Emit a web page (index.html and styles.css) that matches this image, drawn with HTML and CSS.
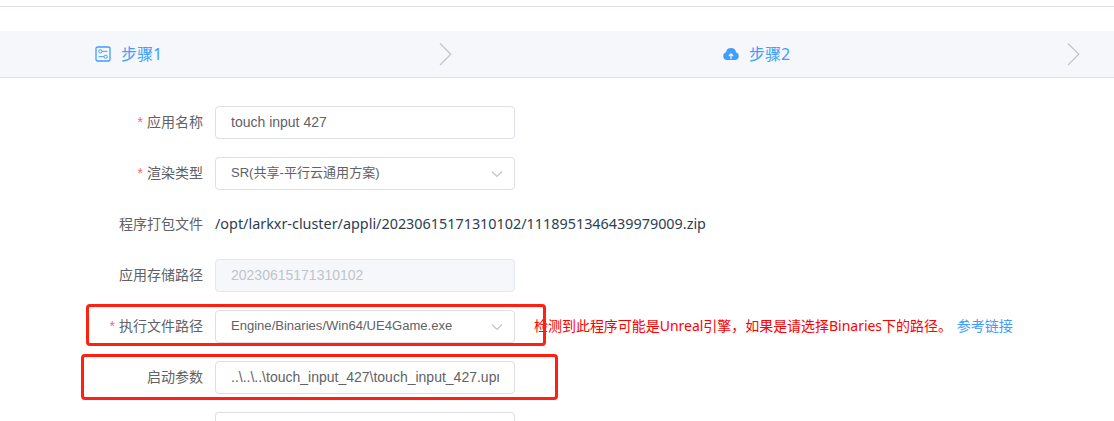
FILE: index.html
```html
<!DOCTYPE html>
<html lang="zh-CN">
<head>
<meta charset="utf-8">
<title>应用编辑</title>
<link rel="stylesheet" href="styles.css">
</head>
<body>
<header class="topbar"></header>
<nav class="steps">
  <div class="step step-first">
    <svg class="step-icon" viewBox="0 0 16 16" fill="none" stroke="currentColor"><rect x="1" y="1" width="14" height="14" rx="1.6" stroke-width="1.3"/><circle cx="5.3" cy="5.3" r="1.6"/><path d="M7 5.3h5.5M3.5 10.7H9"/><circle cx="10.7" cy="10.7" r="1.6"/></svg>
    <span class="step-title">步骤1</span>
    <svg class="step-arrow" viewBox="0 0 14 24"><path d="M1 1.5 11.8 12.3 1 23"/></svg>
  </div>
  <div class="step step-second">
    <svg class="step-icon" viewBox="0 0 16 16"><path fill="currentColor" d="M4 14a4 4 0 0 1-1-7.8A5.1 5.1 0 0 1 13 6.200A4 4 0 0 1 12 14z"/><path class="upload-mark" d="M8 13V8.500M5.900 10 8 7.900 10.100 10"/></svg>
    <span class="step-title">步骤2</span>
    <svg class="step-arrow" viewBox="0 0 14 24"><path d="M1 1.500 11.800 12.300 1 23"/></svg>
  </div>
</nav>
<main class="form">
  <div class="row">
    <label class="label required">应用名称</label>
    <div class="field"><span class="value">touch input 427</span></div>
  </div>
  <div class="row">
    <label class="label required">渲染类型</label>
    <div class="field"><span class="value option">SR(共享-平行云通用方案)</span><svg class="caret" viewBox="0 0 12 8"><path d="M1 1.500 6 6.500 11 1.500"/></svg></div>
  </div>
  <div class="row">
    <label class="label">程序打包文件</label>
    <span class="path">/opt/larkxr-cluster/appli/20230615171310102/1118951346439979009.zip</span>
  </div>
  <div class="row">
    <label class="label">应用存储路径</label>
    <div class="field disabled"><span class="value">20230615171310102</span></div>
  </div>
  <div class="row">
    <label class="label required">执行文件路径</label>
    <div class="field"><span class="value exe">Engine/Binaries/Win64/UE4Game.exe</span><svg class="caret" viewBox="0 0 12 8"><path d="M1 1.500 6 6.500 11 1.500"/></svg></div>
    <span class="hint">检测到此程序可能是Unreal引擎，如果是请选择Binaries下的路径。</span>
    <a class="link">参考链接</a>
    <div class="mark mark-exe"></div>
  </div>
  <div class="row">
    <label class="label">启动参数</label>
    <div class="field"><span class="value args">..\..\..\touch_input_427\touch_input_427.upr</span></div>
    <div class="mark mark-args"></div>
  </div>
  <div class="row row-last">
    <label class="label"></label>
    <div class="field field-cut"></div>
  </div>
</main>
</body>
</html>
```
FILE: styles.css
```css
* { box-sizing: border-box; }
body {
  margin: 0;
  height: 421px;
  overflow: hidden;
  background: #fff;
  color: #2c3e50;
  font: 14px "Noto Sans", "Noto Sans CJK SC", sans-serif;
}
svg { display: block; flex: none; }
.topbar { height: 7px; margin-bottom: 24px; border-bottom: 1px solid #dcdfe6; }
.steps {
  display: flex;
  height: 47px;
  background: #f5f7fa;
  border-bottom: 1px solid #dcdfe6;
}
.step { display: flex; align-items: center; flex: none; color: #409eff; }
.step-first { width: 453px; padding-left: 95px; }
.step-second { width: 628px; padding-left: 270px; }
.step-icon { width: 16px; height: 16px; margin-right: 10px; }
.step-title { font-size: 16px; line-height: 24px; white-space: nowrap; }
.step-arrow { width: 14px; height: 24px; margin-left: auto; }
.step-arrow path { fill: none; stroke: #c0c4cc; stroke-width: 1.2; }
.upload-mark { fill: none; stroke: #f5f7fa; stroke-width: 1.2; }
.form { display: flex; flex-direction: column; gap: 18px; padding-top: 28px; }
.row { position: relative; display: flex; align-items: center; flex: none; height: 33px; white-space: nowrap; }
.row-last { height: 9px; align-items: stretch; }
.label {
  width: 203px;
  margin-right: 12px;
  flex: none;
  text-align: right;
  line-height: 31px;
  padding-bottom: 2px;
  color: #606266;
}
.required::before { content: "*"; margin-right: 4px; color: #f56c6c; font-family: "Liberation Sans", sans-serif; }
.field {
  display: flex;
  align-items: center;
  flex: none;
  width: 300px;
  height: 33px;
  padding: 0 11px 0 15px;
  border: 1px solid #dcdfe6;
  border-radius: 4px;
  background: #fff;
  color: #606266;
  font: 14px "Liberation Sans", "Noto Sans CJK SC", sans-serif;
}
.field-cut { height: 9px; border-bottom: 0; border-radius: 4px 4px 0 0; }
.value { display: block; overflow: hidden; line-height: 20px; padding-bottom: 1px; }
.args { width: 268px; }
.option, .exe { font-size: 13.05px; }
.option { padding-bottom: 2px; }
.disabled { background: #f5f7fa; border-color: #e4e7ed; color: #c0c4cc; }
.caret { width: 12px; height: 8px; margin: 1px 0 0 auto; }
.caret path { fill: none; stroke: #c0c4cc; stroke-width: 1.2; }
.path { font-size: 14.38px; padding-bottom: 2px; }
.hint { margin-left: 19px; padding-bottom: 3px; color: #f00; letter-spacing: -0.03px; }
.link { margin-left: 5px; padding-bottom: 3px; color: #409eff; }
.mark { position: absolute; border: 3px solid #ff2012; border-radius: 4px; }
.mark-exe { left: 86px; top: -6px; width: 460px; height: 42px; }
.mark-args { left: 81px; top: -7px; width: 477px; height: 46px; }
```
